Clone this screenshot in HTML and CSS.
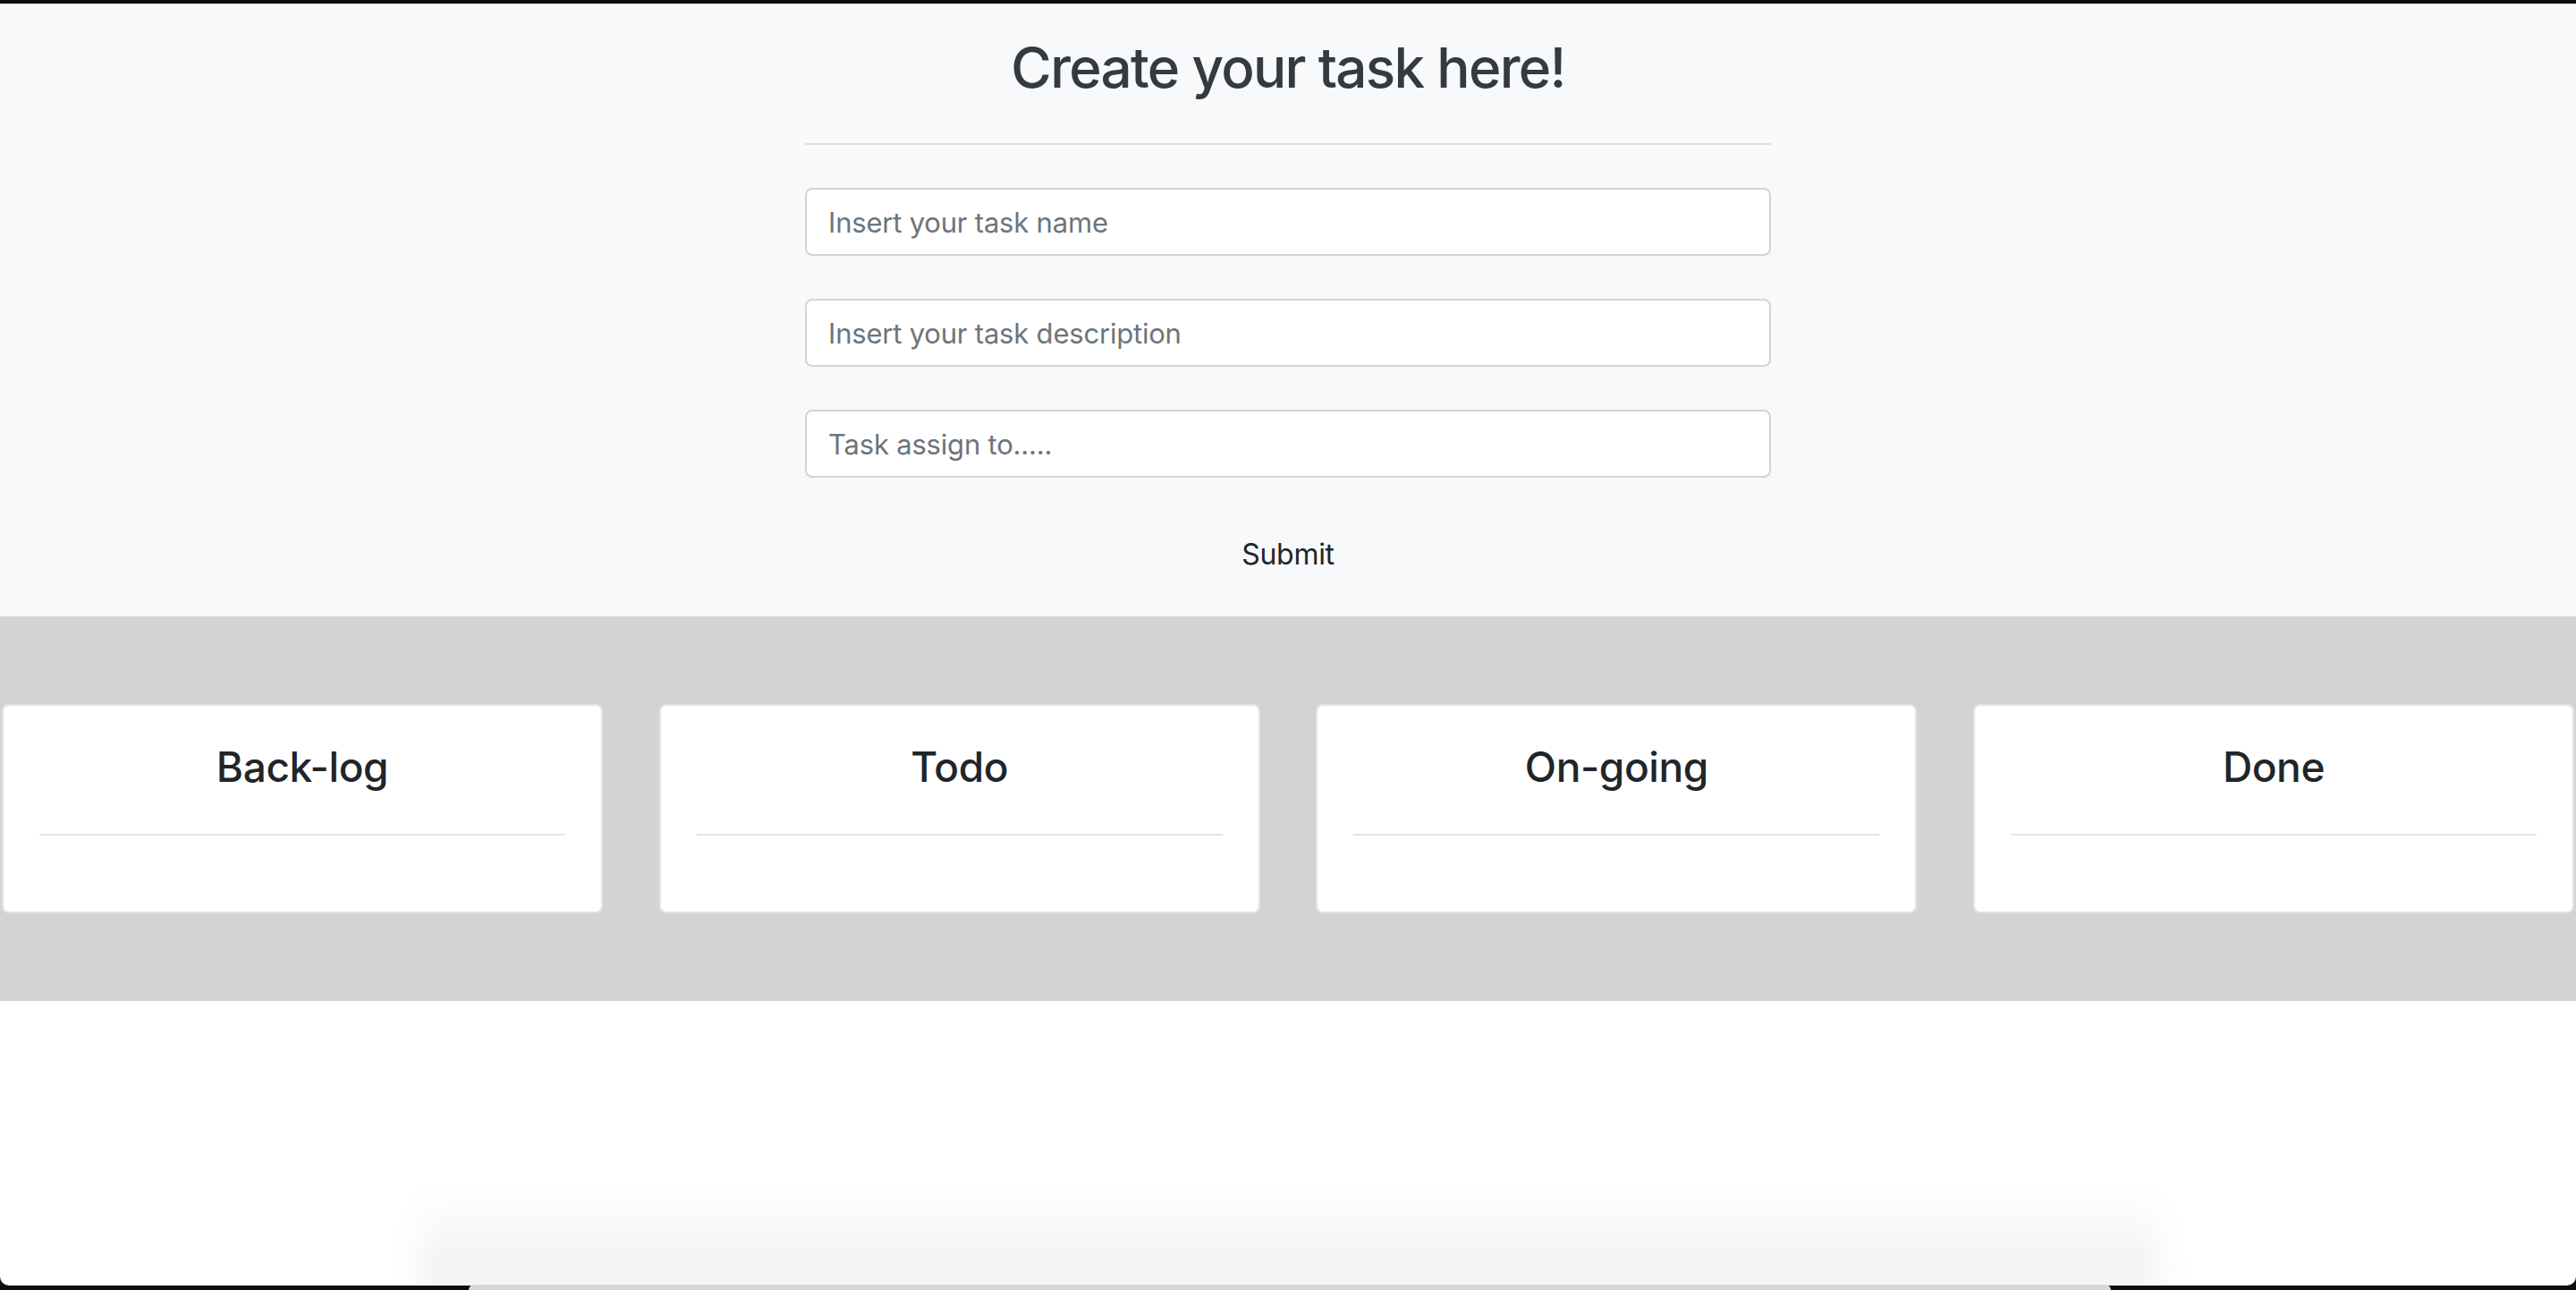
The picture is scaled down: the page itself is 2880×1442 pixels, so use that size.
FILE: index.html
```html
<!DOCTYPE html>
<html lang="en">
<head>
<meta charset="utf-8">
<title>Task board</title>
<link rel="stylesheet" href="styles.css">
</head>
<body>
<div class="window">
  <section class="create">
    <div class="create-inner">
      <h2 class="create-title">Create your task here!</h2>
      <hr class="rule">
      <form class="task-form">
        <input class="field" type="text" placeholder="Insert your task name">
        <input class="field" type="text" placeholder="Insert your task description">
        <input class="field" type="text" placeholder="Task assign to.....">
        <button class="submit" type="button">Submit</button>
      </form>
    </div>
  </section>
  <section class="board">
    <div class="column"><h4 class="column-title">Back-log</h4><hr class="column-rule"></div>
    <div class="column"><h4 class="column-title">Todo</h4><hr class="column-rule"></div>
    <div class="column"><h4 class="column-title">On-going</h4><hr class="column-rule"></div>
    <div class="column"><h4 class="column-title">Done</h4><hr class="column-rule"></div>
  </section>
</div>
<div class="dock-shadow"></div>
<div class="dock"></div>
</body>
</html>
```
FILE: styles.css
```css
* { box-sizing: border-box; }
html, body { height: 100%; }
body {
  margin: 0;
  background: #0e0e0e;
  font-family: "Inter", "Noto Sans", sans-serif;
  display: flex;
  flex-direction: column;
  position: relative;
  overflow: hidden;
}
.window {
  flex: 1;
  margin-top: 4px;
  margin-bottom: 5px;
  background: #ffffff;
  border-radius: 0 0 10px 10px;
  overflow: hidden;
}
.create {
  background: #f8f9fa;
  padding: 35px 0 31px;
}
.create-inner {
  width: 1080px;
  margin: 0 auto;
}
.create-title {
  margin: 0;
  font-size: 62px;
  line-height: 1.2;
  font-weight: 500;
  color: #343a40;
  text-align: center;
  letter-spacing: -1.7px;
}
.rule {
  margin: 47px 0 48px;
  border: 0;
  border-top: 2px solid rgba(0,0,0,0.1);
  height: 0;
}
.task-form {
  display: flex;
  flex-direction: column;
  align-items: center;
}
.field {
  width: 100%;
  height: 76px;
  margin: 0 0 48px;
  padding: 0 24px;
  border: 2px solid #ced4da;
  border-radius: 8px;
  background: #fff;
  font-family: inherit;
  font-size: 31px;
  letter-spacing: -0.2px;
  color: #495057;
}
.field::placeholder { color: #6c757d; opacity: 1; }
.submit {
  height: 76px;
  padding: 12px 24px;
  border: 2px solid transparent;
  background: transparent;
  font-family: inherit;
  font-size: 32px;
  line-height: 1.5;
  letter-spacing: -0.3px;
  color: #212529;
}
.board {
  background: #d3d3d3;
  padding: 98px 2px;
  display: flex;
  justify-content: space-between;
}
.column {
  flex: 0 0 672px;
  height: 234px;
  background: #fff;
  border: 2px solid #e3e3e3;
  border-radius: 8px;
  padding: 41px 40px 40px;
}
.column-title {
  margin: 0;
  font-size: 46px;
  line-height: 1.2;
  font-weight: 500;
  color: #212529;
  text-align: center;
  letter-spacing: -0.4px;
}
.column-rule {
  margin: 46px 0 0;
  border: 0;
  border-top: 2px solid rgba(0,0,0,0.1);
  height: 0;
}
.dock-shadow {
  position: absolute;
  left: 470px;
  bottom: 0;
  width: 1944px;
  height: 110px;
  background: linear-gradient(to bottom, rgba(0,0,0,0), rgba(0,0,0,0.07));
  filter: blur(18px);
}
.dock {
  position: absolute;
  left: 524px;
  bottom: 0;
  width: 1836px;
  height: 6px;
  background: #d8d8d8;
  border-radius: 8px 8px 0 0;
}
```
